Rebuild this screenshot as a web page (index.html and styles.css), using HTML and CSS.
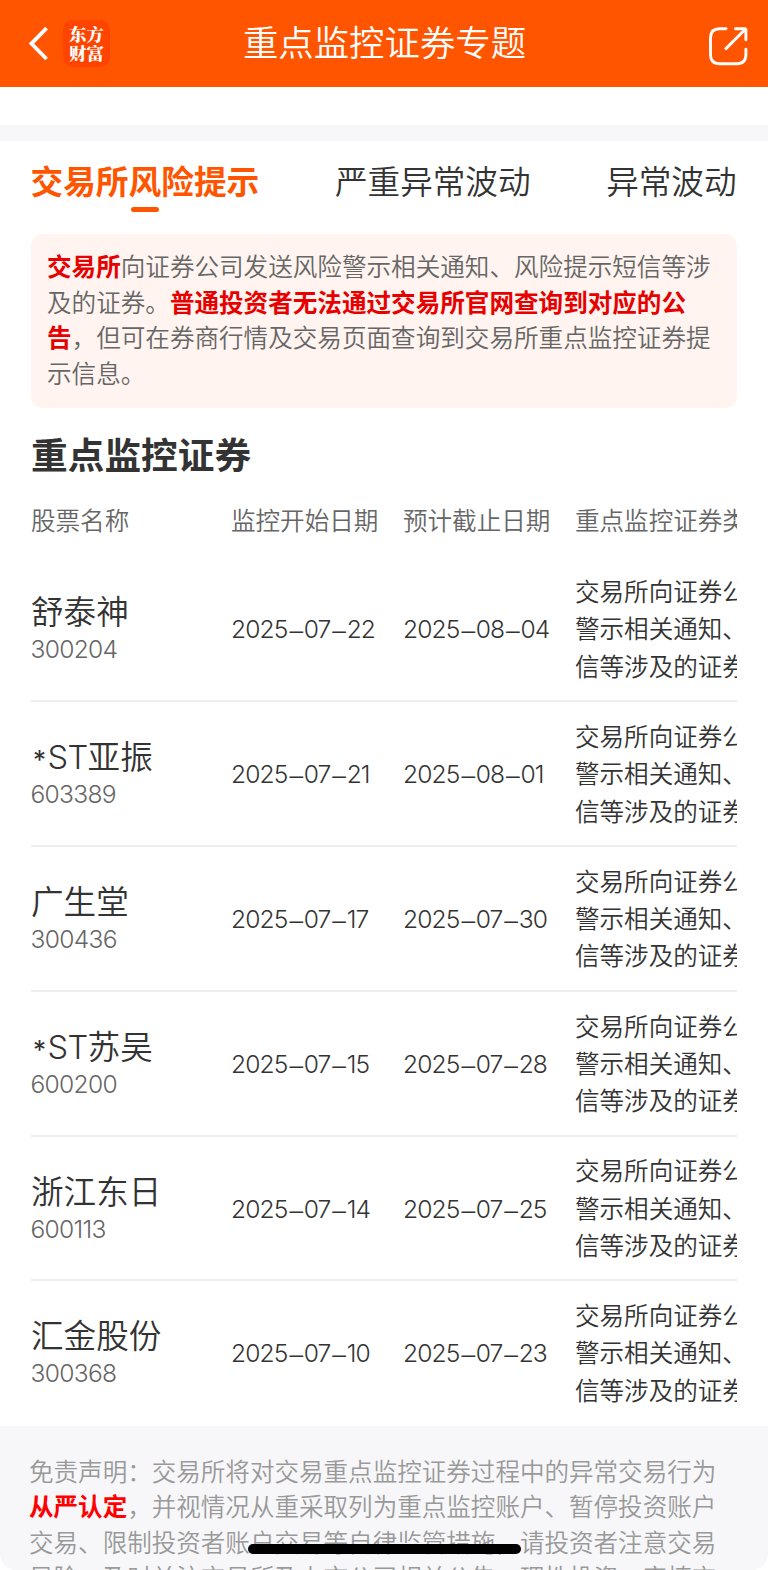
FILE: index.html
```html
<!DOCTYPE html>
<html lang="zh-CN">
<head>
<meta charset="utf-8">
<title>重点监控证券专题</title>
<link rel="stylesheet" href="styles.css">
</head>
<body>
<div class="page">
  <header class="navbar">
    <div class="nav-left">
      <svg class="back" viewBox="0 0 20 36" width="20" height="36"><path d="M18.600 2.200 3.400 17.600 18.600 33" fill="none" stroke="#fff" stroke-width="3.8"/></svg>
      <div class="logo"><span>东方</span><span>财富</span></div>
    </div>
    <h1 class="nav-title">重点监控证券专题</h1>
    <svg class="share" viewBox="0 0 42 42" width="42" height="42"><g fill="none" stroke="#fff" stroke-width="2.9" stroke-linecap="round" stroke-linejoin="round"><path d="M18 2.700H11.500Q2.500 2.700 2.500 11.700V28.800Q2.500 37.800 11.500 37.800H28.700Q37.900 37.800 37.900 28.800V23.200"/><path d="M27.500 2.700H36.500Q37.900 2.700 37.900 4.100V13.800M36.800 3.800 17.900 22.600"/></g></svg>
  </header>
  <div class="divider"></div>
  <nav class="tabs">
    <div class="tab active">交易所风险提示</div>
    <div class="tab">严重异常波动</div>
    <div class="tab">异常波动</div>
  </nav>
  <p class="notice"><b>交易所</b>向证券公司发送风险警示相关通知、风险提示短信等涉及的证券。<b>普通投资者无法通过交易所官网查询到对应的公告</b>，但可在券商行情及交易页面查询到交易所重点监控证券提示信息。</p>
  <h2 class="section-title">重点监控证券</h2>
  <div class="table">
    <div class="row head"><div>股票名称</div><div>监控开始日期</div><div>预计截止日期</div><div>重点监控证券类型</div></div>
    <div class="row"><div><div class="name">舒泰神</div><div class="code">300204</div></div><div class="date">2025<s>–</s>07<s>–</s>22</div><div class="date">2025<s>–</s>08<s>–</s>04</div><div class="type">交易所向证券公司发送风险<br>警示相关通知、风险提示短<br>信等涉及的证券</div></div>
    <div class="row"><div><div class="name"><i class="star">*</i><i>ST</i>亚振</div><div class="code">603389</div></div><div class="date">2025<s>–</s>07<s>–</s>21</div><div class="date">2025<s>–</s>08<s>–</s>01</div><div class="type">交易所向证券公司发送风险<br>警示相关通知、风险提示短<br>信等涉及的证券</div></div>
    <div class="row"><div><div class="name">广生堂</div><div class="code">300436</div></div><div class="date">2025<s>–</s>07<s>–</s>17</div><div class="date">2025<s>–</s>07<s>–</s>30</div><div class="type">交易所向证券公司发送风险<br>警示相关通知、风险提示短<br>信等涉及的证券</div></div>
    <div class="row"><div><div class="name"><i class="star">*</i><i>ST</i>苏吴</div><div class="code">600200</div></div><div class="date">2025<s>–</s>07<s>–</s>15</div><div class="date">2025<s>–</s>07<s>–</s>28</div><div class="type">交易所向证券公司发送风险<br>警示相关通知、风险提示短<br>信等涉及的证券</div></div>
    <div class="row"><div><div class="name">浙江东日</div><div class="code">600113</div></div><div class="date">2025<s>–</s>07<s>–</s>14</div><div class="date">2025<s>–</s>07<s>–</s>25</div><div class="type">交易所向证券公司发送风险<br>警示相关通知、风险提示短<br>信等涉及的证券</div></div>
    <div class="row"><div><div class="name">汇金股份</div><div class="code">300368</div></div><div class="date">2025<s>–</s>07<s>–</s>10</div><div class="date">2025<s>–</s>07<s>–</s>23</div><div class="type">交易所向证券公司发送风险<br>警示相关通知、风险提示短<br>信等涉及的证券</div></div>
  </div>
  <footer class="disclaimer">免责声明：交易所将对交易重点监控证券过程中的异常交易行为<b>从严认定</b>，并视情况从重采取列为重点监控账户、暂停投资账户交易、限制投资者账户交易等自律监管措施，请投资者注意交易风险，及时关注交易所及上市公司相关公告，理性投资，审慎交易</footer>
  <div class="home-bar"></div>
</div>
</body>
</html>
```
FILE: styles.css
```css
* { box-sizing: border-box; margin: 0; padding: 0; }
html, body { height: 1570px; overflow: hidden; }
body { background: #fff; color: #333; font-family: "Noto Sans CJK SC", sans-serif; font-weight: 350; }
.page { position: relative; width: 768px; height: 1570px; overflow: hidden; display: flex; flex-direction: column; border-radius: 0 0 16px 16px; }
.navbar { flex: none; height: 87px; background: #ff5500; display: grid; grid-template-columns: 1fr auto 1fr; align-items: center; color: #fff; padding: 0 18px 0 28px; }
.nav-left { display: flex; align-items: center; gap: 15px; }
.logo { width: 47px; height: 47px; border-radius: 10px; background: #ff4400; display: flex; flex-direction: column; align-items: center; justify-content: center; padding-bottom: 1px; font-family: "Noto Serif CJK SC", "Noto Sans CJK SC", serif; font-weight: 900; font-size: 17.5px; line-height: 19.5px; }
.nav-title { font-size: 35.4px; font-weight: 350; line-height: 50px; padding-bottom: 5px; margin-left: -9px; }
.share { justify-self: end; margin-top: 6px; }
.divider { flex: none; height: 16px; margin-top: 38px; background: #f7f7fa; }
.tabs { flex: none; height: 93px; padding: 13px 31.5px 0 30.5px; display: flex; justify-content: space-between; font-size: 32.6px; line-height: 52px; }
.tab { position: relative; height: 58px; white-space: nowrap; }
.tab.active { color: #ff5500; font-weight: 700; font-size: 32.7px; }
.tab.active::after { content: ""; position: absolute; left: 50%; bottom: 0; width: 28px; height: 5px; margin-left: -14px; border-radius: 3px; background: #ff5500; }
.notice { flex: none; margin: 0 31px; height: 174px; padding: 14px 10px 0 16px; border-radius: 12px; background: #fff4ef; color: #666; font-size: 24.58px; line-height: 35.6px; }
b { color: #e60000; font-weight: 700; }
.section-title { flex: none; margin: 17px 31px 0; font-size: 36.7px; line-height: 56px; font-weight: 700; }
.table { flex: none; margin: 4px 31px 0; overflow: hidden; }
.row { display: grid; grid-template-columns: 200px 172px 172px 300px; width: 706px; height: 144.9px; align-items: center; border-bottom: 2px solid #eee; white-space: nowrap; }
.row:last-child { border-bottom: 0; padding-bottom: 3px; }
.row.head { height: 72px; border: 0; padding-bottom: 3px; color: #666; font-size: 24.56px; }
.name { font-size: 32.6px; line-height: 38px; height: 41px; }
.name i { font-family: Inter, sans-serif; font-style: normal; font-weight: 300; line-height: 0; letter-spacing: -0.6px; }
.name .star { font-size: 26px; font-weight: 400; margin: 0 2px; }
.code { font-family: Inter, sans-serif; font-size: 24.6px; line-height: 34px; color: #666; letter-spacing: -0.7px; margin-left: -0.5px; }
.date { font-family: Inter, sans-serif; font-size: 24.6px; letter-spacing: -0.9px; padding-top: 2px; }
.date s { font-family: "Liberation Sans", sans-serif; text-decoration: none; margin: 0 1.5px 0 2px; }
.type { font-size: 24.56px; line-height: 37.4px; padding-bottom: 1px; }
.disclaimer { flex: 1; background: #f7f7fa; padding: 26.5px 40px 0 29px; color: #999; font-size: 24.56px; line-height: 35.5px; }
.disclaimer b { color: #ff0000; }
.home-bar { position: absolute; left: 248px; top: 1544px; width: 273px; height: 10px; border-radius: 5px; background: #000; }
```
